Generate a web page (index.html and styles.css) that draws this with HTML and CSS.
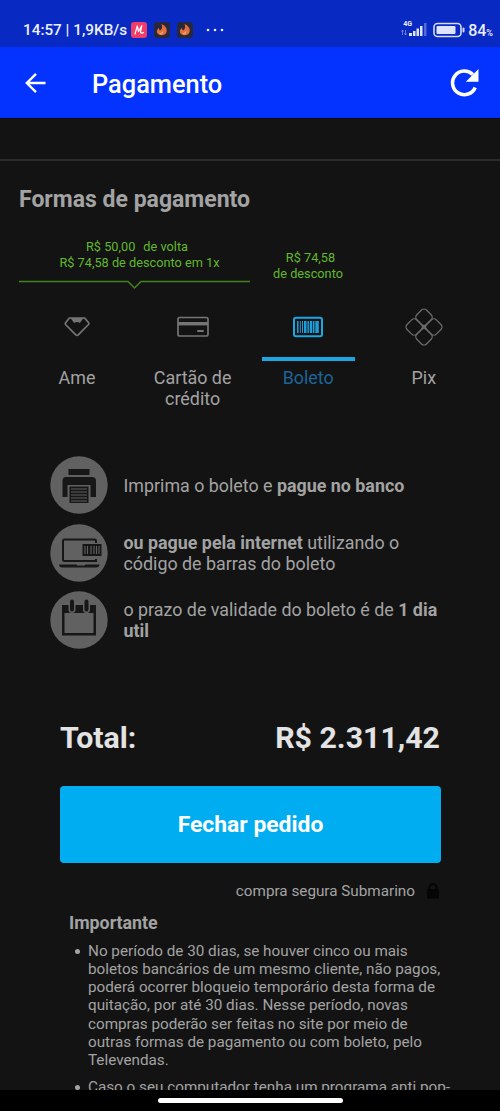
FILE: index.html
```html
<!DOCTYPE html>
<html lang="pt-BR">
<head>
<meta charset="utf-8">
<title>Pagamento</title>
<link rel="stylesheet" href="styles.css">
</head>
<body>
<div class="screen">
  <div class="status">
    <span class="clock">14:57 | 1,9KB/s</span>
    <svg class="notif" width="93" height="20" viewBox="0 0 93 20">
      <rect x="0" y="2" width="16" height="16" rx="3" fill="#f03d69"/>
      <path d="M4 14 6.300 6 7.500 11.500 10.800 5.700 9.500 12.200Q10 13.700 12.300 12.600" fill="none" stroke="#fff" stroke-width="1.200" stroke-linejoin="round" stroke-linecap="round"/>
      <g id="flame">
        <rect x="23" y="2" width="16" height="16" rx="3.500" fill="#29283a"/>
        <path d="M30.500 4c4 2 6 4.500 5 8-1 4-8 4.500-9.500.5C25.200 10.500 27 9 27.500 8c.8 1 .8 2 1.500 2.500C31.500 9 31.500 6.500 30.500 4z" fill="#e0703f"/>
        <path d="M28 12.500c1.500 1 3.500 0 4-2 1 2-.5 4-2.500 4z" fill="#f5a566"/>
      </g>
      <use href="#flame" x="23"/>
      <g fill="#eceeff"><circle cx="77" cy="10" r="1.300"/><circle cx="84" cy="10" r="1.300"/><circle cx="91" cy="10" r="1.300"/></g>
    </svg>
    <div class="network">
      <span class="gen">4G</span>
      <svg width="27" height="14" viewBox="0 0 27 14">
        <path d="M1.500 12V7M.5 8.500l1-1.500 1 1.500M4.500 7v5M3.500 10.500l1 1.500 1-1.500" fill="none" stroke="#8c9ae4" stroke-width=".7"/>
        <g fill="#dfe4ff"><rect x="8" y="10" width="3" height="3"/><rect x="12" y="8" width="2.500" height="5"/><rect x="15.500" y="5.500" width="2.500" height="7.500"/><rect x="19" y="3" width="2.500" height="10"/></g>
        <rect x="23" y="0" width="2.500" height="13" fill="#536bd7"/>
      </svg>
    </div>
    <svg class="battery" width="32" height="16" viewBox="0 0 32 16">
      <rect x="1" y="1.500" width="27" height="13" rx="3.500" fill="none" stroke="#d5daf5" stroke-width="1.600"/>
      <rect x="3.500" y="4" width="19" height="8" rx="1" fill="#dfe4ff"/><rect x="29.500" y="5.500" width="2" height="5" rx="1" fill="#d5daf5"/>
    </svg>
    <span class="charge">84<small>%</small></span>
  </div>

  <header class="appbar">
    <svg width="22" height="22" viewBox="0 0 22 22"><path d="M20.500 11H2M11 1.800 1.800 11 11 20.200" fill="none" stroke="#fff" stroke-width="2.400"/></svg>
    <h1>Pagamento</h1>
    <svg width="30" height="30" viewBox="0 0 30 30"><path d="M25.200 19.500A11.800 11.800 0 1 1 22.800 6.600" fill="none" stroke="#fff" stroke-width="3.600"/><path d="M28.500 1v12.700H15.800z" fill="#fff"/></svg>
  </header>

  <main class="content">
    <div class="strip"></div>
    <h2>Formas de pagamento</h2>

    <div class="offers">
      <div class="offer-main">
        <p><span class="cashback"><span class="cash">R$ 50,00</span>de volta</span><br>R$ 74,58 de desconto em 1x</p>
        <svg width="231" height="10" viewBox="0 0 231 10"><path d="M0 1.500H109L115.500 8 122 1.500H231" fill="none" stroke="#438221" stroke-width="1.500"/></svg>
      </div>
      <p class="offer-side"><span class="discount">R$ 74,58</span><br>de desconto</p>
    </div>

    <nav class="tabs">
      <div class="tab">
        <svg width="40" height="40" viewBox="0 0 40 40"><path d="M12.300 11H27.700L31.800 16Q32 16.800 31.500 17.500L21.200 27.800Q20 28.800 18.800 27.800L8.500 17.500Q8 16.800 8.500 16Z" fill="none" stroke="#757575" stroke-width="1.700" stroke-linejoin="round"/><path d="M13.500 11H26.500L22.800 16Q20 13.800 17.200 16Z" fill="#757575"/></svg>
        <span>Ame</span>
      </div>
      <div class="tab">
        <svg width="40" height="40" viewBox="0 0 40 40"><rect x="5" y="10.500" width="30" height="18.500" rx="1.700" fill="none" stroke="#757575" stroke-width="1.700"/><path d="M5 16.700H35" stroke="#757575" stroke-width="3.400"/><path d="M25 23.900H30" stroke="#757575" stroke-width="2" stroke-linecap="round"/></svg>
        <span>Cartão de<br>crédito</span>
      </div>
      <div class="tab active">
        <svg width="40" height="40" viewBox="0 0 40 40"><rect x="6" y="10.800" width="28" height="18.500" rx="2" fill="none" stroke="#1ca7e5" stroke-width="2"/><g fill="#1c9fdc"><rect x="9" y="14" width="1.500" height="12"/><rect x="11.800" y="14" width="1" height="12"/><rect x="14" y="14" width="1" height="12"/><rect x="16" y="14" width="2.500" height="12"/><rect x="19.400" y="14" width="1.500" height="12"/><rect x="21.800" y="14" width="2.500" height="12"/><rect x="25" y="14" width="1.500" height="12"/><rect x="27.300" y="14" width="3.500" height="12"/></g></svg>
        <span>Boleto</span>
      </div>
      <div class="tab">
        <svg width="40" height="40" viewBox="0 0 40 40"><g fill="none" stroke="#6c6c6c" stroke-width="1.300"><rect x="-6.800" y="-6.800" width="13.600" height="13.600" rx="3.500" transform="translate(20 10.200) rotate(45)"/><rect x="-6.800" y="-6.800" width="13.600" height="13.600" rx="3.500" transform="translate(20 29.800) rotate(45)"/><rect x="-6.800" y="-6.800" width="13.600" height="13.600" rx="3.500" transform="translate(10.200 20) rotate(45)"/><rect x="-6.800" y="-6.800" width="13.600" height="13.600" rx="3.500" transform="translate(29.800 20) rotate(45)"/><path d="M17.500 17.500l5 5M22.500 17.500l-5 5"/></g></svg>
        <span>Pix</span>
      </div>
    </nav>

    <ul class="steps">
      <li>
        <svg width="58" height="58" viewBox="0 0 58 58"><circle cx="29" cy="29" r="28.700" fill="#616161"/><g fill="#171717"><path d="M18.500 13h21v6h-21z"/><path d="M16 21h26q4 0 4 4v16h-5.500V29h-23v12H12.500V25q0-4 3.500-4z"/><path d="M19.500 30.500h19V47h-19z"/></g><path d="M21 33h16M21 36h16M21 39h16M21 42h16M21 45h16" stroke="#616161" stroke-width="1"/></svg>
        <p>Imprima o boleto e <b>pague no banco</b></p>
      </li>
      <li>
        <svg width="58" height="58" viewBox="0 0 58 58"><circle cx="29" cy="29" r="28.700" fill="#616161"/><path d="M46 19V17q0-1.500-1.500-1.500h-30Q13 15.500 13 17v18.500q0 1.500 1.500 1.500H46v-2" fill="none" stroke="#171717" stroke-width="2"/><path d="M9 40.500h17.500l1 1h7l1-1H49.500q0 3-3.500 3H12.500Q9 43.500 9 40.500z" fill="#171717"/><path d="M32.500 20H51.500V32H32.500z" fill="#171717"/><path d="M35 22v8M37.500 22v8M41 22v8M44 22v8M46.500 22v8M49 22v8" stroke="#616161" stroke-width="1.100"/></svg>
        <p><b>ou pague pela internet</b> utilizando o<br>código de barras do boleto</p>
      </li>
      <li>
        <svg width="58" height="58" viewBox="0 0 58 58"><circle cx="29" cy="29" r="28.700" fill="#616161"/><path d="M12 14H46V44.500H12zM14.500 22V42H43.500V22z" fill="#171717" fill-rule="evenodd"/><path d="M22 10.500v8M36.500 10.500v8" stroke="#616161" stroke-width="7" stroke-linecap="round"/><path d="M22 10.500v8M36.500 10.500v8" stroke="#171717" stroke-width="4" stroke-linecap="round"/></svg>
        <p>o prazo de validade do boleto é de <b>1 dia<br>util</b></p>
      </li>
    </ul>

    <section class="summary">
      <div class="total"><span>Total:</span><span class="price">R$ 2.311,42</span></div>
      <button class="close-order">Fechar pedido</button>
      <div class="secure"><span>compra segura Submarino</span>
        <svg width="14" height="18" viewBox="0 0 14 18"><rect x="1" y="7" width="12" height="9.500" rx="1" fill="#050505"/><path d="M3.500 8V5.500a3.500 3.500 0 0 1 7 0V8" fill="none" stroke="#050505" stroke-width="2"/></svg>
      </div>
    </section>

    <section class="notes">
      <h3>Importante</h3>
      <ul>
        <li>No período de 30 dias, se houver cinco ou mais<br>boletos bancários de um mesmo cliente, não pagos,<br>poderá ocorrer bloqueio temporário desta forma de<br>quitação, por até 30 dias. Nesse período, novas<br>compras poderão ser feitas no site por meio de<br>outras formas de pagamento ou com boleto, pelo<br>Televendas.</li>
        <li>Caso o seu computador tenha um programa anti pop-</li>
      </ul>
    </section>
  </main>
  <footer class="gesture"><div class="pill"></div></footer>
</div>
</body>
</html>
```

FILE: styles.css
```css
* { box-sizing: border-box; }
body, h1, h2, h3, p, ul { margin: 0; padding: 0; }
ul { list-style: none; }
svg { display: block; flex: none; overflow: visible; }
body { background: #131313; font-family: Roboto, sans-serif; color: #a3a3a3; }
.screen { width: 500px; height: 1111px; display: flex; flex-direction: column; overflow: hidden; white-space: nowrap; }

.status { height: 47px; flex: none; background: #0829c2; color: #eceeff; display: flex; align-items: center; padding: 13px 7px 0 23px; }
.clock { font-size: 15.300px; font-weight: 500; width: 108px; }
.network { margin-left: auto; width: 27px; height: 20px; position: relative; display: flex; align-items: flex-end; padding-bottom: 3px; }
.gen { position: absolute; left: 2px; top: 0; font-size: 7px; line-height: 8px; font-weight: 700; }
.battery { margin-left: 5px; }
.charge { font-size: 16px; font-weight: 500; margin-left: 3px; }
.charge small { font-size: 9px; }

.appbar { height: 71px; flex: none; background: #0433ff; color: #fff; display: flex; align-items: center; padding: 0 20px 0 25px; }
.appbar h1 { font-size: 25.400px; font-weight: 500; line-height: 30px; margin: 3px auto 0 45px; }

.content { flex: 1; min-height: 0; overflow: hidden; }
.strip { height: 43px; border-bottom: 2px solid #2b2b2b; border-top: 1px solid #080808; }
h2 { font-size: 23px; line-height: 28px; font-weight: 700; margin: 25px 0 0 19px; }

.offers { display: flex; padding: 25px 0 0 19px; height: 75px; font-size: 12.750px; line-height: 15.500px; color: #62b92d; text-align: center; }
.offer-main { width: 231px; }
.offer-main p { padding-left: 10px; }
.offer-main svg { margin-top: 10px; }
.cashback { margin-right: 5px; }
.cash { margin-right: 8px; }
.offer-side { width: 116px; padding-top: 11px; }
.discount { margin-left: 5px; }

.tabs { display: grid; grid-template-columns: repeat(4, 93px); column-gap: 22.600px; padding: 18px 0 0 30.500px; height: 118px; }
.tab { display: flex; flex-direction: column; align-items: center; text-align: center; font-size: 17.900px; line-height: 21px; }
.tab span { width: 100%; border-top: 4px solid transparent; padding-top: 6px; margin-top: 10px; }
.tab.active { color: #1b659a; }
.tab.active span { border-color: #1ba6e3; }

.steps { display: flex; flex-direction: column; gap: 9.500px; padding: 49px 0 0 49.500px; }
.steps li { display: flex; align-items: center; gap: 16px; font-size: 17.850px; line-height: 21px; height: 58px; }

.summary { padding: 69px 60px 0; }
.total { display: flex; justify-content: space-between; font-size: 30.300px; line-height: 40px; font-weight: 700; color: #e3e3e3; }
.close-order { display: block; width: 381px; height: 77px; margin-top: 28px; border: 0; border-radius: 4px; background: #00adf0; color: #fff; font: 700 22.900px Roboto, sans-serif; }
.secure { display: flex; justify-content: flex-end; align-items: center; gap: 11px; margin-top: 18px; font-size: 15.260px; line-height: 20px; }

.notes { padding: 10px 0 0 69px; }
.notes h3 { font-size: 17.800px; line-height: 24px; font-weight: 700; }
.notes ul { margin-top: 7px; font-size: 15.260px; line-height: 18.120px; }
.notes li { padding-left: 19px; margin-bottom: 9px; position: relative; }
.notes li::before { content: ""; position: absolute; left: 6px; top: 7px; width: 5px; height: 5px; border-radius: 50%; background: #a3a3a3; }

.gesture { height: 21px; flex: none; background: #000; display: flex; justify-content: center; padding-top: 8px; }
.pill { width: 185px; height: 5px; border-radius: 3px; background: #fff; }
```
